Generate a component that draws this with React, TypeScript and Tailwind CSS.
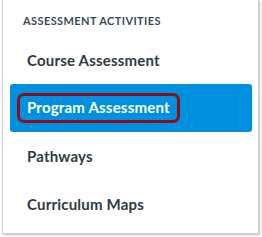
const items = ['Course Assessment', 'Program Assessment', 'Pathways', 'Curriculum Maps'];

export default function App() {
  return (
    <div className="w-[262px] h-[237px] bg-white" style={{ fontFamily: 'Lato, "Open Sans", sans-serif' }}>
      <div className="ml-[2px] w-[257px] h-[234px] bg-white border-x border-b border-[#c7cdd1] shadow-[1px_1px_2px_rgba(0,0,0,0.25)]">
        <div className="pl-[20px] pt-[14px] h-[36px] text-[11px] font-bold tracking-[0.4px] text-[#394b58] leading-[13px]">
          ASSESSMENT ACTIVITIES
        </div>
        <ul className="pl-[7px] pr-[6px]">
          {items.map((label, i) => {
            const active = i === 1;
            return (
              <li
                key={label}
                className={`h-12 flex items-center pl-[7px] rounded-[3px] ${active ? 'bg-[#0090e0]' : ''}`}
              >
                {active ? (
                  <span className="flex items-center h-[30px] mt-[-1px] px-[7px] rounded-[7px] border-[3px] border-[#8c0d1c] text-[15px] font-bold tracking-[0.2px] text-white">
                    {label}
                  </span>
                ) : (
                  <span className="px-[10px] text-[15px] font-bold tracking-[0.2px] text-[#2d3b45]">{label}</span>
                )}
              </li>
            );
          })}
        </ul>
      </div>
    </div>
  );
}
